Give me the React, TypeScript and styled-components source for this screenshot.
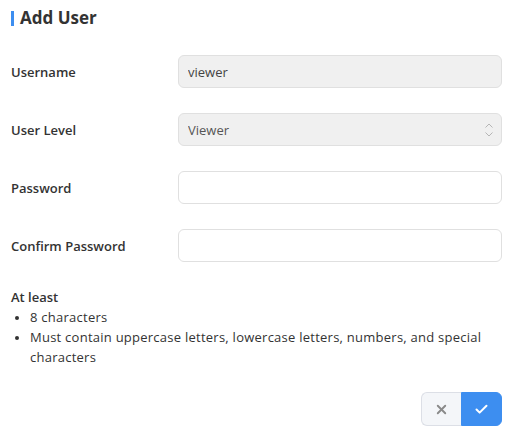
import React from 'react';
import styled, { createGlobalStyle } from 'styled-components';
import { X, Check } from 'lucide-react';

const GlobalStyle = createGlobalStyle`
  html, body {
    margin: 0;
    padding: 0;
    background: #ffffff;
  }
  body {
    font-family: 'Open Sans', 'Noto Sans', sans-serif;
    color: #333333;
  }
  * {
    box-sizing: border-box;
  }
`;

type Field = {
  label: string;
  value?: string;
  kind: 'text' | 'select' | 'password';
  disabled?: boolean;
};

const fields: Field[] = [
  { label: 'Username', value: 'viewer', kind: 'text', disabled: true },
  { label: 'User Level', value: 'Viewer', kind: 'select', disabled: true },
  { label: 'Password', kind: 'password' },
  { label: 'Confirm Password', kind: 'password' }
];

const rules = ['8 characters', 'Must contain uppercase letters, lowercase letters, numbers, and special characters'];

const App: React.FC = () => {
  return (
    <>
      <GlobalStyle />
      <Wrapper>
        <Title>Add User</Title>
        <Form>
          {fields.map((field) => (
            <Row key={field.label}>
              <Label>{field.label}</Label>
              {field.kind === 'select' ? (
                <SelectWrap>
                  <Select disabled={field.disabled} defaultValue={field.value}>
                    <option>Viewer</option>
                    <option>Operator</option>
                    <option>Admin</option>
                  </Select>
                  <Arrows width="10" height="16" viewBox="0 0 10 16" fill="none">
                    <path d="M1.5 5.5 L5 2 L8.5 5.5" stroke="#b5b5b5" strokeWidth="1" />
                    <path d="M1.5 10.5 L5 14 L8.5 10.5" stroke="#b5b5b5" strokeWidth="1" />
                  </Arrows>
                </SelectWrap>
              ) : (
                <Input
                  type={field.kind}
                  defaultValue={field.value}
                  disabled={field.disabled}
                />
              )}
            </Row>
          ))}
        </Form>
        <Hints>
          <HintTitle>At least</HintTitle>
          <HintList>
            {rules.map((rule) => (
              <HintItem key={rule}>{rule}</HintItem>
            ))}
          </HintList>
        </Hints>
        <Actions>
          <ButtonGroup>
            <CancelButton aria-label="Cancel">
              <X size={15} strokeWidth={3} />
            </CancelButton>
            <ConfirmButton aria-label="Confirm">
              <Check size={15} strokeWidth={3.2} />
            </ConfirmButton>
          </ButtonGroup>
        </Actions>
      </Wrapper>
    </>
  );
};

const Wrapper = styled.div`
  width: 510px;
  padding: 6px 8px 0 11px;
  display: flex;
  flex-direction: column;
`;

const Title = styled.h2`
  margin: 0;
  display: flex;
  align-items: center;
  gap: 6px;
  font-size: 17px;
  line-height: 24px;
  font-weight: 700;
  color: #333333;

  &::before {
    content: '';
    width: 3px;
    height: 15px;
    background: #3d8ef0;
  }
`;

const Form = styled.div`
  margin-top: 25px;
  display: flex;
  flex-direction: column;
  gap: 25px;
`;

const Row = styled.div`
  display: grid;
  grid-template-columns: 167px 1fr;
  align-items: center;
`;

const Label = styled.label`
  font-size: 13px;
  font-weight: 600;
  color: #333333;
`;

const Input = styled.input`
  width: 100%;
  height: 33px;
  padding: 0 9px;
  border: 1px solid #e0e0e0;
  border-radius: 6px;
  background: #ffffff;
  font-family: inherit;
  font-size: 13px;
  color: #444444;
  outline: none;

  &:disabled {
    background: #f0f0f0;
    color: #444444;
    -webkit-text-fill-color: #444444;
  }
`;

const SelectWrap = styled.div`
  position: relative;
`;

const Select = styled.select`
  width: 100%;
  height: 33px;
  padding: 0 9px;
  border: 1px solid #e0e0e0;
  border-radius: 6px;
  background: #f0f0f0;
  font-family: inherit;
  font-size: 13px;
  color: #555555;
  appearance: none;
  outline: none;
  opacity: 1;
`;

const Arrows = styled.svg`
  position: absolute;
  right: 8px;
  top: 50%;
  transform: translateY(-50%);
  pointer-events: none;
`;

const Hints = styled.div`
  margin-top: 25px;
  font-size: 13px;
  line-height: 20px;
  color: #333333;
`;

const HintTitle = styled.div`
  font-weight: 600;
`;

const HintList = styled.ul`
  margin: 0;
  padding: 0 0 0 19px;
  list-style: disc;
  letter-spacing: 0.25px;
`;

const HintItem = styled.li`
  &::marker {
    font-size: 11px;
  }
`;

const Actions = styled.div`
  margin-top: 25px;
  display: flex;
  justify-content: flex-end;
`;

const ButtonGroup = styled.div`
  display: flex;
`;

const BaseButton = styled.button`
  width: 41px;
  height: 34px;
  display: flex;
  align-items: center;
  justify-content: center;
  padding: 0;
  cursor: pointer;
`;

const CancelButton = styled(BaseButton)`
  width: 40px;
  background: #f4f6f9;
  border: 1px solid #dcdfe6;
  border-right: none;
  border-radius: 6px 0 0 6px;
  color: #8a8a8a;
`;

const ConfirmButton = styled(BaseButton)`
  background: #3d8ef0;
  border: 1px solid #3d8ef0;
  border-radius: 0 6px 6px 0;
  color: #ffffff;
`;

export default App;
